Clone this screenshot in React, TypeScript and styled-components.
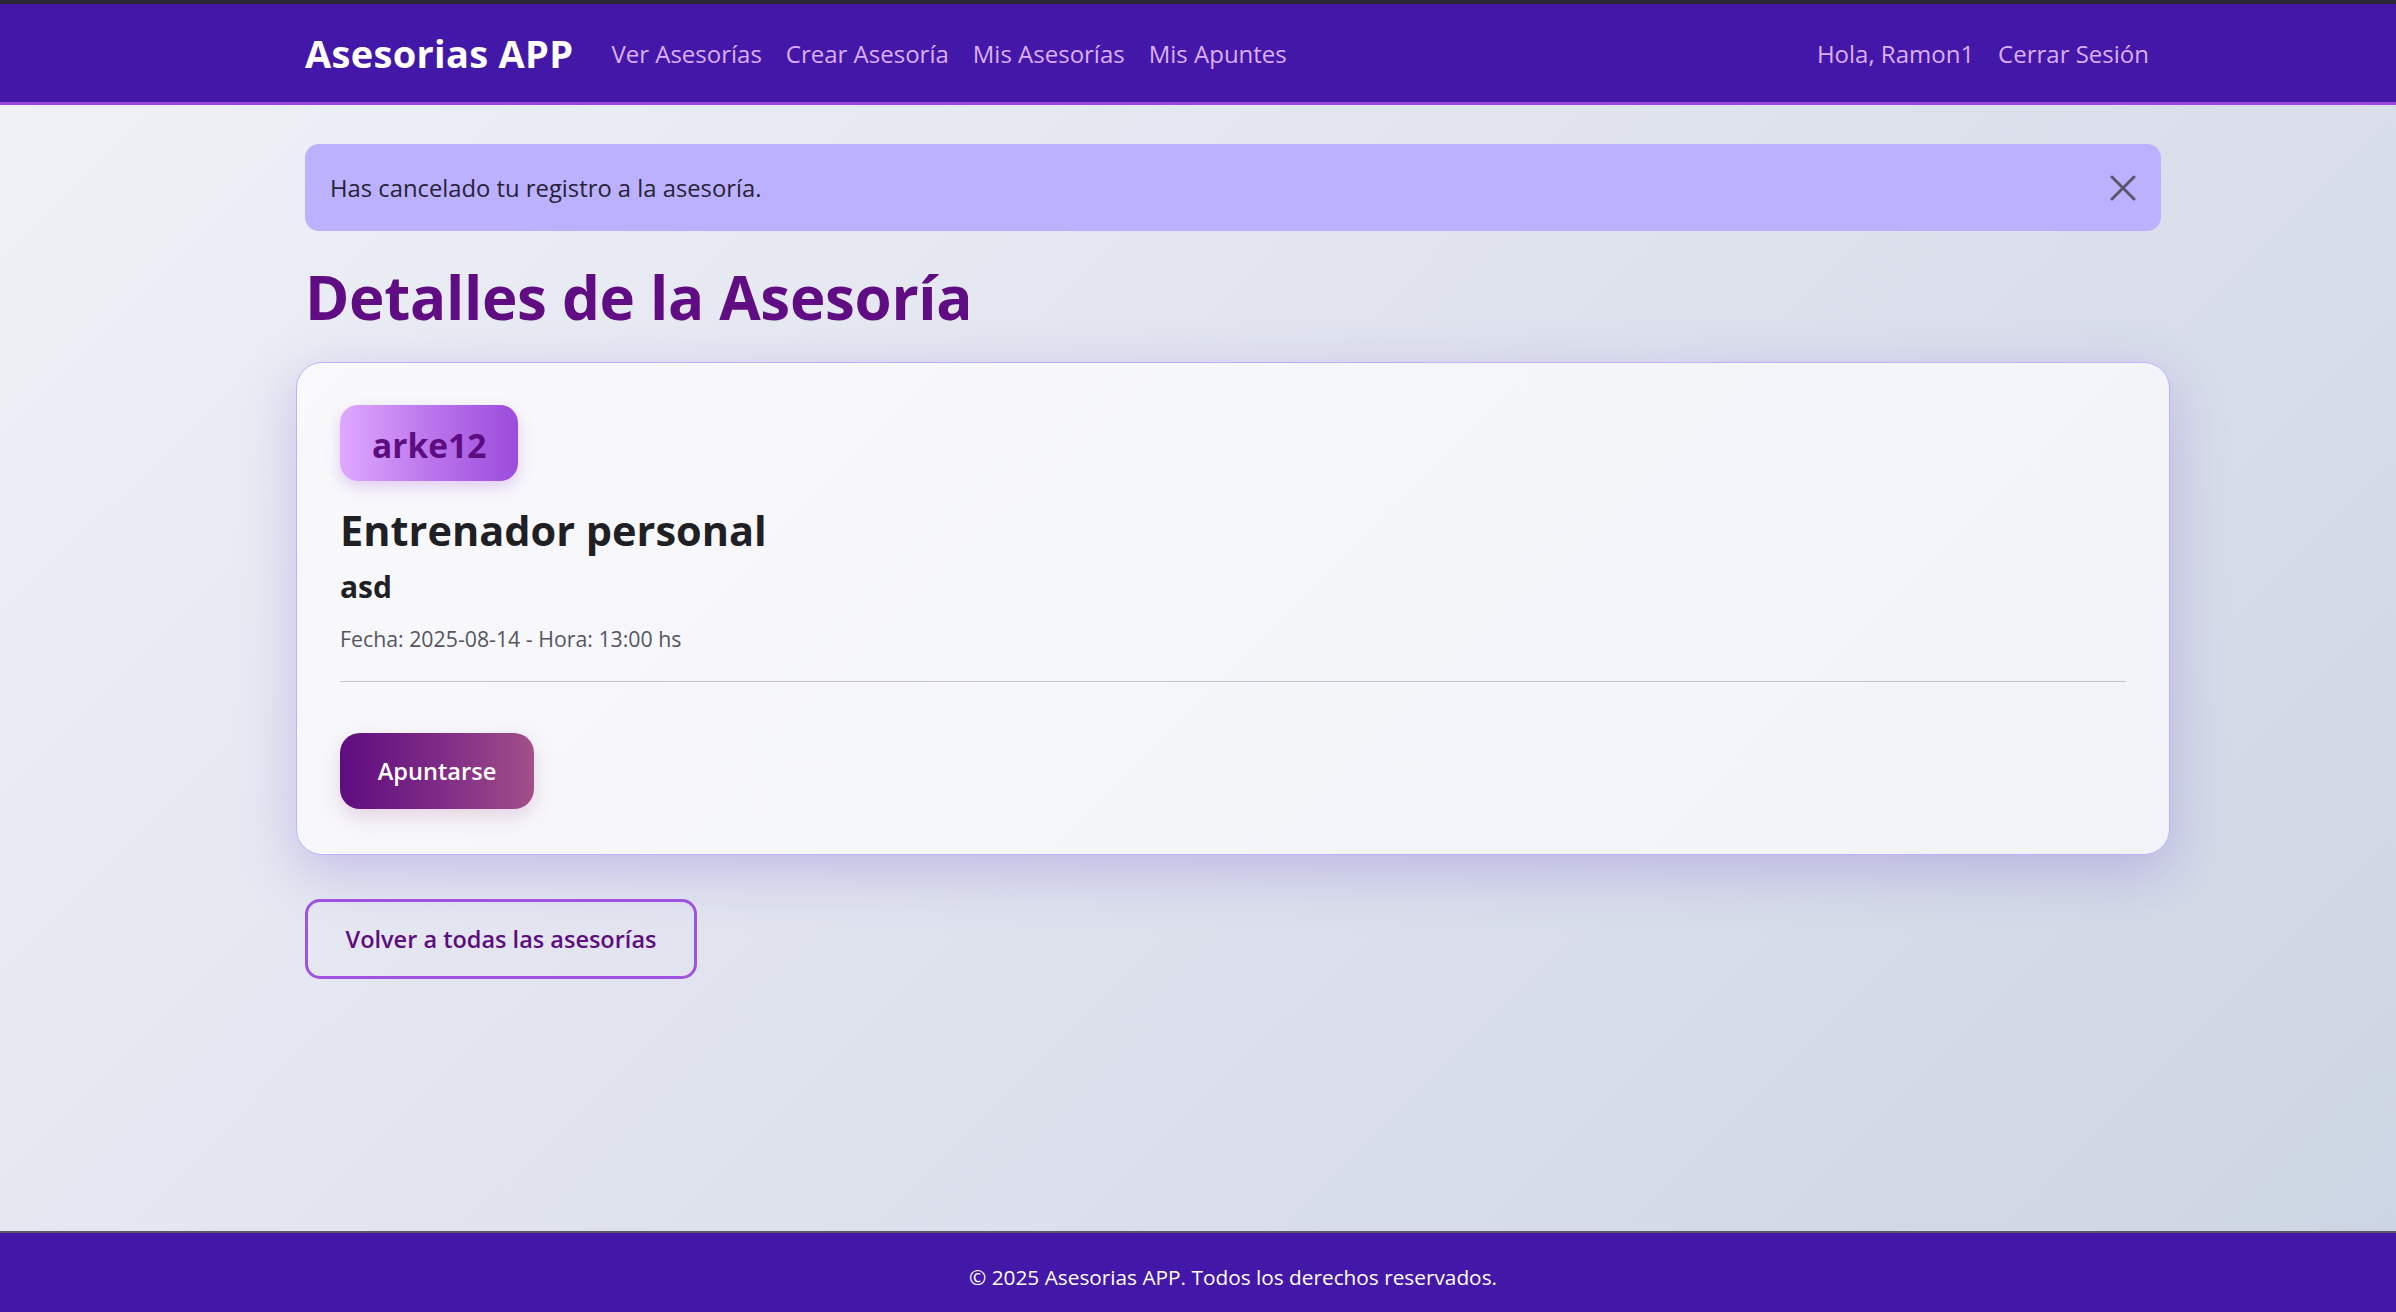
import React, { useState } from 'react';
import styled, { createGlobalStyle } from 'styled-components';

const GlobalStyle = createGlobalStyle`
  * {
    box-sizing: border-box;
  }
  body {
    margin: 0;
    font-family: 'Segoe UI', 'Open Sans', 'Noto Sans', sans-serif;
    background: linear-gradient(135deg, #f0f2f7 0%, #e1e4ef 45%, #ccd5e3 100%);
    min-height: 100vh;
  }
`;

const Page = styled.div`
  display: flex;
  flex-direction: column;
  min-height: 100vh;
`;

const Container = styled.div`
  width: 1856px;
  margin-left: 305px;
`;

const Navbar = styled.nav`
  background: #4317a8;
  border-top: 4px solid #2b2735;
  border-bottom: 3px solid #9c47d9;
  height: 105px;
  display: flex;
  align-items: center;
`;

const NavInner = styled(Container)`
  display: flex;
  align-items: center;
  justify-content: space-between;
`;

const NavGroup = styled.div`
  display: flex;
  align-items: center;
`;

const Brand = styled.a`
  color: #ffffff;
  font-size: 38px;
  font-weight: 700;
  letter-spacing: 0.3px;
  margin-right: 26px;
  text-decoration: none;
`;

const NavLink = styled.a`
  color: #ddaeff;
  font-size: 24px;
  padding: 0 12px;
  text-decoration: none;
  cursor: pointer;
`;

const Main = styled.main`
  flex: 1;
  padding-top: 39px;
  padding-bottom: 60px;
`;

const Alert = styled.div`
  height: 87px;
  background: #bcb1ff;
  border-radius: 14px;
  display: flex;
  align-items: center;
  justify-content: space-between;
  padding: 0 24px 0 25px;
  color: #272238;
  font-size: 23.8px;
`;

const CloseButton = styled.button`
  background: transparent;
  border: none;
  padding: 0;
  width: 28px;
  height: 28px;
  display: flex;
  align-items: center;
  justify-content: center;
  cursor: pointer;
`;

const Title = styled.h1`
  margin: 28px 0 26px;
  color: #600c82;
  font-size: 60px;
  font-weight: 700;
  line-height: 77px;
  letter-spacing: -0.3px;
`;

const Card = styled.section`
  margin: 0 -9px;
  padding: 42px 43px 45px;
  background: linear-gradient(135deg, #f9f9fc 0%, #f5f6fa 50%, #f1f3f8 100%);
  border: 1.5px solid #bdb1ff;
  border-radius: 26px;
  box-shadow: 0 16px 55px rgba(120, 90, 210, 0.3);
`;

const Badge = styled.div`
  display: inline-flex;
  align-items: center;
  height: 76px;
  padding: 3px 32px 0;
  border-radius: 18px;
  background: linear-gradient(90deg, #dfa9ff 0%, #bb76ec 50%, #9b4bdc 100%);
  color: #5e0c80;
  font-size: 33.5px;
  font-weight: 700;
  box-shadow: 0 6px 16px rgba(155, 77, 219, 0.25);
`;

const CardTitle = styled.h2`
  margin: 20px 0 0;
  color: #1f1f26;
  font-size: 41.5px;
  font-weight: 700;
  line-height: 58px;
`;

const Subtitle = styled.h3`
  margin: 9px 0 0;
  color: #1f1f26;
  font-size: 30px;
  font-weight: 700;
  line-height: 38px;
`;

const Meta = styled.p`
  margin: 17px 0 0;
  color: #555560;
  font-size: 21.3px;
  line-height: 32px;
`;

const Divider = styled.hr`
  margin: 26px 0 0;
  border: none;
  border-top: 1.5px solid #c4c4ca;
`;

const PrimaryButton = styled.button`
  margin-top: 51px;
  width: 194px;
  height: 76px;
  border: none;
  border-radius: 20px;
  background: linear-gradient(90deg, #5e0c80 0%, #7e2a85 50%, #a24f8a 100%);
  color: #ffffff;
  font-family: inherit;
  font-size: 23.6px;
  font-weight: 600;
  box-shadow: 0 8px 20px rgba(160, 80, 140, 0.22);
  cursor: pointer;
`;

const OutlineButton = styled.button`
  margin-top: 44px;
  width: 392px;
  height: 80px;
  background: transparent;
  border: 3px solid #a152de;
  border-radius: 15px;
  color: #5e0c80;
  font-family: inherit;
  font-size: 23.5px;
  font-weight: 600;
  cursor: pointer;
`;

const Footer = styled.footer`
  background: #4317a8;
  border-top: 2px solid #585866;
  height: 81px;
  display: flex;
  align-items: center;
`;

const FooterText = styled(Container)`
  text-align: center;
  color: #ffffff;
  font-size: 20.8px;
  padding-top: 9px;
`;

const navLinks = ['Ver Asesorías', 'Crear Asesoría', 'Mis Asesorías', 'Mis Apuntes'];

const App = () => {
  const [showAlert, setShowAlert] = useState<boolean>(true);

  return (
    <Page>
      <GlobalStyle />
      <Navbar>
        <NavInner>
          <NavGroup>
            <Brand>Asesorias APP</Brand>
            {navLinks.map((link) => (
              <NavLink key={`nav-link-${link}`}>{link}</NavLink>
            ))}
          </NavGroup>
          <NavGroup>
            <NavLink>Hola, Ramon1</NavLink>
            <NavLink>Cerrar Sesión</NavLink>
          </NavGroup>
        </NavInner>
      </Navbar>

      <Main>
        <Container>
          {showAlert && (
            <Alert>
              <span>Has cancelado tu registro a la asesoría.</span>
              <CloseButton onClick={() => setShowAlert(false)} aria-label="Cerrar">
                <svg width="26" height="26" viewBox="0 0 26 26">
                  <path
                    d="M2 2 L24 24 M24 2 L2 24"
                    stroke="#5b5670"
                    strokeWidth="3"
                    strokeLinecap="round"
                  />
                </svg>
              </CloseButton>
            </Alert>
          )}

          <Title>Detalles de la Asesoría</Title>

          <Card>
            <Badge>arke12</Badge>
            <CardTitle>Entrenador personal</CardTitle>
            <Subtitle>asd</Subtitle>
            <Meta>Fecha: 2025-08-14 - Hora: 13:00 hs</Meta>
            <Divider />
            <PrimaryButton>Apuntarse</PrimaryButton>
          </Card>

          <OutlineButton>Volver a todas las asesorías</OutlineButton>
        </Container>
      </Main>

      <Footer>
        <FooterText>© 2025 Asesorias APP. Todos los derechos reservados.</FooterText>
      </Footer>
    </Page>
  );
};

export default App;
